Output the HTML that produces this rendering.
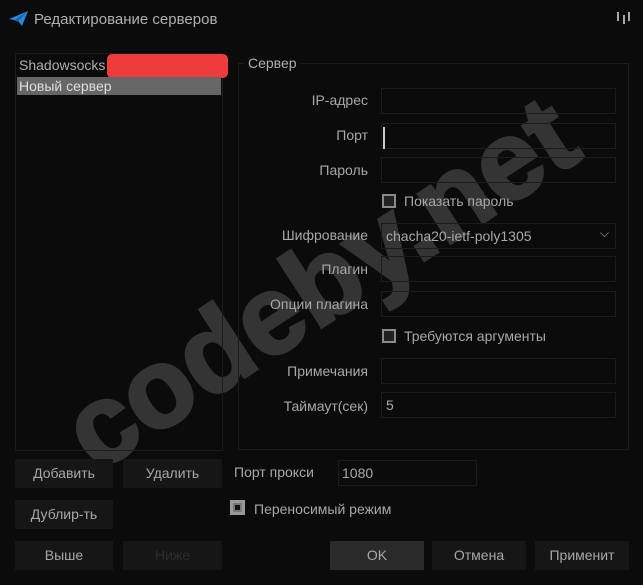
<!DOCTYPE html>
<html><head><meta charset="utf-8"><style>
*{box-sizing:border-box;margin:0;padding:0}
body{width:643px;height:585px;background:#0b0b0b;font-family:"Liberation Sans","DejaVu Sans",sans-serif;font-size:14px;color:#a8a8a8;position:relative;overflow:hidden}
.a{position:absolute}
.inp{position:absolute;left:381px;width:235px;height:26px;border:1px solid #1c1c1c;padding:4px 4px;color:#a8a8a8}
.lbl{position:absolute;right:275px;text-align:right;white-space:nowrap}
.btn{position:absolute;height:29px;background:#161616;text-align:center;line-height:29px;color:#a8a8a8}
.cb{position:absolute;width:14px;height:14px;border:2px solid #8a8a8a;background:#222}
</style></head><body>
<div class="a" style="left:10px;top:228px;width:620px;text-align:center;font-size:112px;font-weight:bold;color:#343434;transform:rotate(-33deg);transform-origin:center;line-height:110px;white-space:nowrap;-webkit-text-stroke:3px #343434">codeby.net</div>

<svg class="a" style="left:9px;top:11px" width="20" height="16" viewBox="0 0 20 16"><path d="M0 8 L19 0 L13 15 L9 10 Z" fill="#2a86d8"/><path d="M6 9 L19 0 L8 11 Z" fill="#1a5fa0"/></svg>
<div class="a" style="left:34px;top:11px;font-size:15px;color:#b0b0b0">Редактирование серверов</div>
<div class="a" style="left:617px;top:12px;width:2px;height:9px;background:#aaa"></div>
<div class="a" style="left:623px;top:15px;width:2px;height:9px;background:#aaa"></div>
<div class="a" style="left:628px;top:12px;width:2px;height:9px;background:#aaa"></div>

<div class="a" style="left:15px;top:53px;width:208px;height:398px;border:1px solid #1c1c1c"></div>
<div class="a" style="left:19px;top:57px;color:#b0b0b0">Shadowsocks</div>
<div class="a" style="left:107px;top:54px;width:121px;height:24px;background:#ee3b3b;border-radius:5px"></div>
<div class="a" style="left:17px;top:77px;width:204px;height:18px;background:#666;color:#ddd;padding-left:2px;line-height:18px">Новый сервер</div>

<div class="a" style="left:238px;top:63px;width:391px;height:387px;border:1px solid #1c1c1c"></div>
<div class="a" style="left:244px;top:55px;background:#0b0b0b;padding:0 4px;color:#b0b0b0">Сервер</div>

<div class="lbl" style="top:92px">IP-адрес</div><div class="inp" style="top:88px"></div>
<div class="lbl" style="top:127px">Порт</div><div class="inp" style="top:123px"></div>
<div class="a" style="left:383px;top:127px;width:5px;height:22px;border-left:2px solid #ccc"></div>
<div class="lbl" style="top:162px">Пароль</div><div class="inp" style="top:157px"></div>
<div class="cb" style="left:382px;top:194px"></div><div class="a" style="left:404px;top:193px">Показать пароль</div>
<div class="lbl" style="top:227px">Шифрование</div><div class="inp" style="top:223px">chacha20-ietf-poly1305<span style="position:absolute;right:6px;top:2px;font-size:12px">⌵</span></div>
<div class="lbl" style="top:261px">Плагин</div><div class="inp" style="top:256px"></div>
<div class="lbl" style="top:296px">Опции плагина</div><div class="inp" style="top:291px"></div>
<div class="cb" style="left:382px;top:329px"></div><div class="a" style="left:404px;top:328px">Требуются аргументы</div>
<div class="lbl" style="top:363px">Примечания</div><div class="inp" style="top:358px"></div>
<div class="lbl" style="top:398px">Таймаут(сек)</div><div class="inp" style="top:392px">5</div>

<div class="btn" style="left:15px;top:459px;width:98px">Добавить</div>
<div class="btn" style="left:123px;top:459px;width:99px">Удалить</div>
<div class="btn" style="left:15px;top:500px;width:98px">Дублир-ть</div>
<div class="btn" style="left:15px;top:541px;width:98px">Выше</div>
<div class="btn" style="left:123px;top:541px;width:99px;color:#2e2e2e">Ниже</div>
<div class="a" style="left:234px;top:464px">Порт прокси</div>
<div class="a" style="left:338px;top:460px;width:139px;height:26px;border:1px solid #1c1c1c;padding:4px 3px">1080</div>
<div class="a" style="left:230px;top:500px;width:15px;height:15px;background:#999;padding:3px"><div style="width:9px;height:9px;background:#111;border:2px solid #777"></div></div>
<div class="a" style="left:254px;top:501px">Переносимый режим</div>
<div class="btn" style="left:330px;top:541px;width:94px;background:#2a2a2a">OK</div>
<div class="btn" style="left:432px;top:541px;width:94px">Отмена</div>
<div class="btn" style="left:535px;top:541px;width:94px">Применит</div>
</body></html>
